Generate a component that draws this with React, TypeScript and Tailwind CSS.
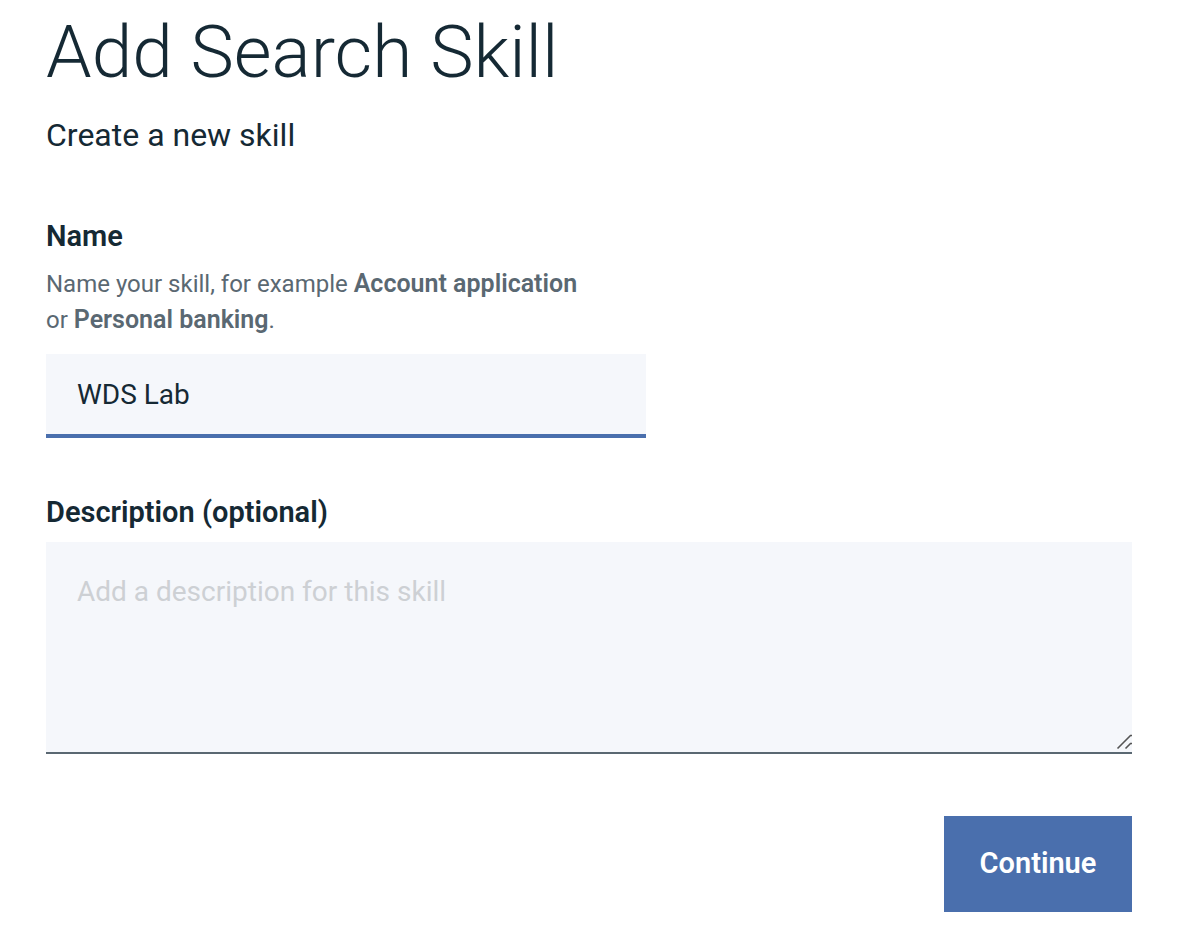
export default function App() {
  return (
    <main className="bg-white pt-[12px] pr-[68px] pb-[18px] pl-[46px] font-['Roboto','Noto_Sans',sans-serif] text-[#152934]">
      <h1 className="text-[73px] leading-[80px] font-[350]">Add Search Skill</h1>
      <p className="mt-[22px] text-[32px] leading-[42px]">Create a new skill</p>
      <form onSubmit={(e) => e.preventDefault()} className="mt-[60px]">
        <label htmlFor="skill-name" className="block text-[29px] leading-[40px] font-semibold">Name</label>
        <p id="name-hint" className="mt-[10px] max-w-[600px] text-[24px] leading-[36px] text-[#5a6872]">
          Name your skill, for example <strong className="text-[25px] font-semibold">Account application</strong>
          <br />
          or <strong className="text-[25px] font-semibold">Personal banking</strong>.
        </p>
        <input
          id="skill-name"
          type="text"
          defaultValue="WDS Lab"
          aria-describedby="name-hint"
          className="mt-[16px] block h-[84px] w-full max-w-[600px] rounded-none border-b-4 border-[#4a6fad] bg-[#f5f7fb] px-[31px] text-[28px] outline-none"
        />
        <label htmlFor="skill-description" className="mt-[54px] block text-[29px] leading-[40px] font-semibold">
          Description (optional)
        </label>
        <div className="relative mt-[10px]">
          <textarea
            id="skill-description"
            placeholder="Add a description for this skill"
            className="block h-[212px] w-full resize-none rounded-none border-b-2 border-[#5a6872] bg-[#f5f7fb] px-[31px] py-[30px] text-[28px] leading-[40px] outline-none placeholder:text-[#cdd0d4]"
          />
          <svg aria-hidden="true" className="pointer-events-none absolute right-0 bottom-1 h-4 w-4" viewBox="0 0 16 16" fill="none" stroke="#555" strokeWidth="1.6">
            <path d="M1.5 14.5L14.5 1.5H16M9.5 14.5L14.5 9.5H16" />
          </svg>
        </div>
        <div className="mt-[62px] flex justify-end">
          <button type="submit" className="h-[96px] min-w-[188px] bg-[#4a6fad] px-[32px] text-[29px] font-semibold text-white">Continue</button>
        </div>
      </form>
    </main>
  );
}
